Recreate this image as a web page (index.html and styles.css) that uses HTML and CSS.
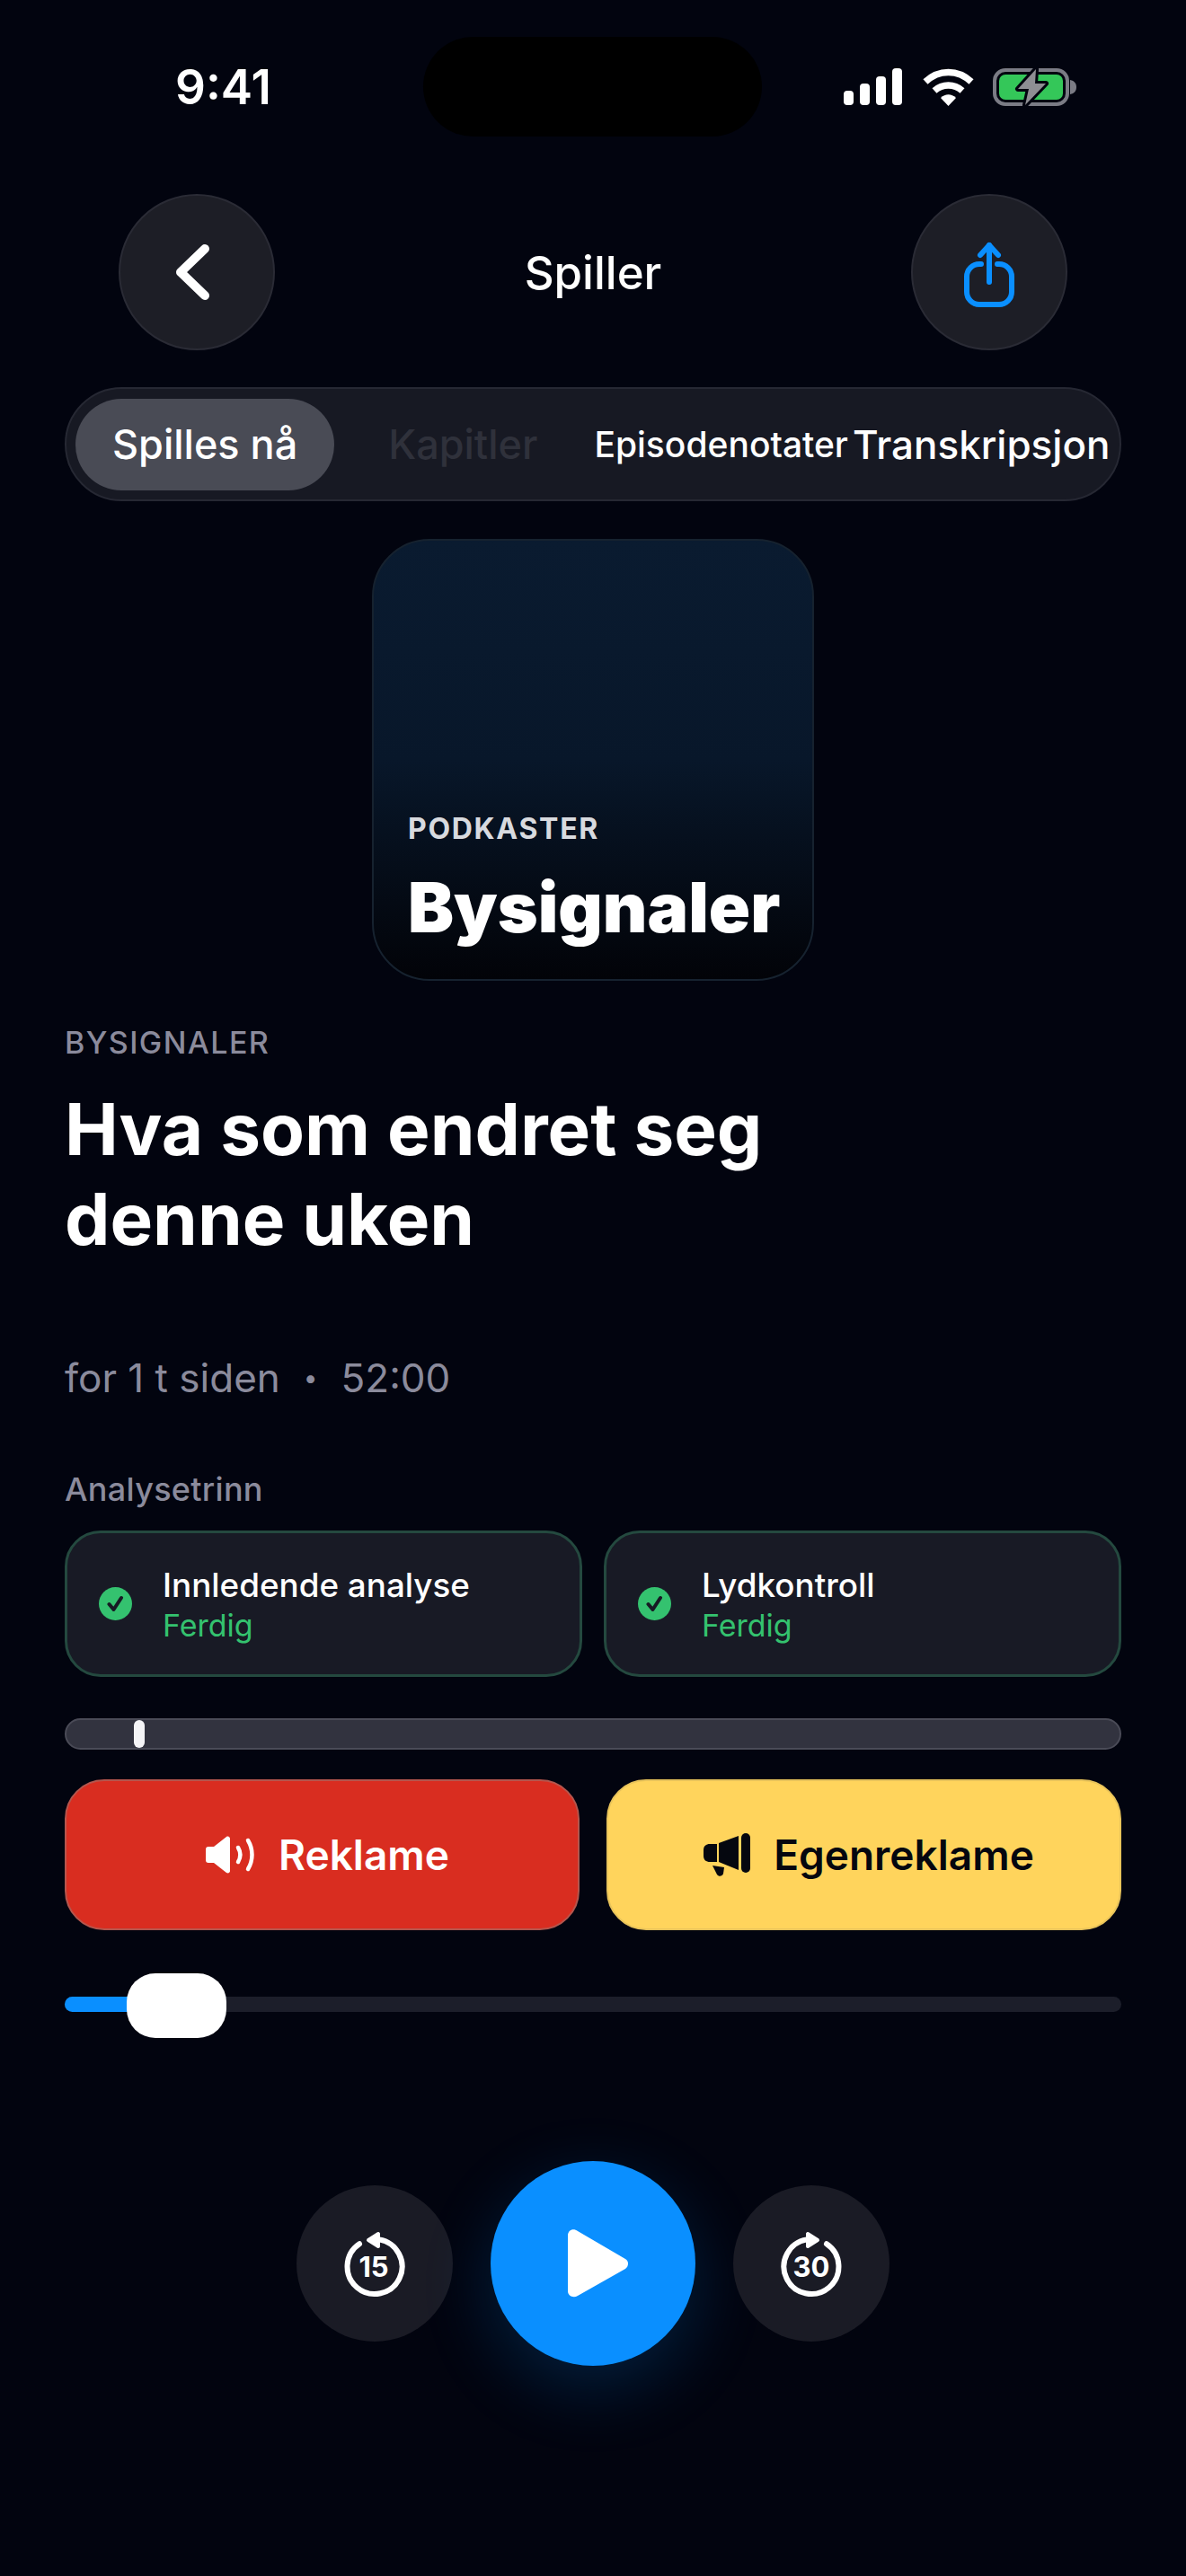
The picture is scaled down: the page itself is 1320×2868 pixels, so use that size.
FILE: index.html
```html
<!DOCTYPE html>
<html lang="nb">
  <head>
    <meta charset="UTF-8" />
    <meta name="viewport" content="width=device-width, initial-scale=1.0" />
    <title>Spiller</title>
    <link rel="stylesheet" href="styles.css">
  </head>
  <body>
    <div class="status-bar">
      <span class="time">9:41</span>
      <div class="island"></div>
      <div class="status-icons">
        <svg width="65" height="41" viewBox="0 0 65 41" fill="#fff">
          <rect x="0" y="25" width="11" height="16" rx="4" />
          <rect x="18" y="17" width="11" height="24" rx="4" />
          <rect x="36" y="9" width="11" height="32" rx="4" />
          <rect x="54" y="0" width="11" height="41" rx="4" />
        </svg>
        <svg class="wifi" width="57" height="42" viewBox="0 0 57 42" fill="none" stroke="#fff" stroke-width="7.5">
          <path d="M3 15 C18 1 39 1 54 15" />
          <path d="M13 25 C22 17 35 17 44 25" />
          <path d="M20 33 L28.5 42 L37 33 C32 28 25 28 20 33 Z" fill="#fff" stroke="none" />
        </svg>
        <svg class="battery" width="93" height="44" viewBox="0 0 93 44">
          <rect x="2" y="3" width="81" height="38" rx="12" fill="none" stroke="#7b7c85" stroke-width="4" />
          <rect x="7" y="8" width="71" height="28" rx="7" fill="#34c759" />
          <path d="M86 14 C91 15 93 18 93 22 C93 26 91 29 86 30 Z" fill="#7b7c85" />
          <path class="bolt" d="M48 2 L28 24 L40 24 L36 42 L59 18 L47 18 Z" />
        </svg>
      </div>
    </div>

    <div class="nav">
      <button class="round-btn">
        <svg width="60" height="80" viewBox="0 0 60 80" fill="none" stroke="#fff" stroke-width="10" stroke-linecap="round" stroke-linejoin="round">
          <path d="M39 14 L12 40 L39 66" />
        </svg>
      </button>
      <span class="nav-title">Spiller</span>
      <button class="round-btn">
        <svg width="60" height="80" viewBox="0 0 60 80" fill="none" stroke="#0a8fff" stroke-width="6" stroke-linecap="round" stroke-linejoin="round">
          <path d="M21 31 H19 A14 14 0 0 0 5 45 V62 A14 14 0 0 0 19 76 H41 A14 14 0 0 0 55 62 V45 A14 14 0 0 0 41 31 H39" />
          <path d="M30 51 V10" />
          <path d="M20 21 L30 10 L40 21" />
        </svg>
      </button>
    </div>

    <div class="tabs">
      <span class="tab tab-active">Spilles nå</span>
      <span class="tab tab-disabled">Kapitler</span>
      <span class="tab tab-small">Episodenotater</span>
      <span class="tab tab-last">Transkripsjon</span>
    </div>

    <div class="cover">
      <div class="cover-label">PODKASTER</div>
      <div class="cover-title">Bysignaler</div>
    </div>

    <div class="episode">
      <div class="show-name">BYSIGNALER</div>
      <h1 class="episode-title">Hva som endret seg<br />denne uken</h1>
      <div class="meta">
        <span>for 1 t siden</span>
        <span class="meta-dot">•</span>
        <span>52:00</span>
      </div>
      <div class="steps-label">Analysetrinn</div>
    </div>

    <div class="steps">
      <div class="step">
        <svg class="check" width="37" height="37" viewBox="0 0 37 37">
          <circle cx="18.5" cy="18.5" r="18.5" fill="#34c26f" />
          <path d="M11.5 19 L16.5 25 L25 12" fill="none" stroke="#171a24" stroke-width="4" stroke-linecap="round" stroke-linejoin="round" />
        </svg>
        <div>
          <div class="step-title">Innledende analyse</div>
          <div class="step-status">Ferdig</div>
        </div>
      </div>
      <div class="step">
        <svg class="check" width="37" height="37" viewBox="0 0 37 37">
          <circle cx="18.5" cy="18.5" r="18.5" fill="#34c26f" />
          <path d="M11.5 19 L16.5 25 L25 12" fill="none" stroke="#171a24" stroke-width="4" stroke-linecap="round" stroke-linejoin="round" />
        </svg>
        <div>
          <div class="step-title">Lydkontroll</div>
          <div class="step-status">Ferdig</div>
        </div>
      </div>
    </div>

    <div class="strip">
      <div class="strip-thumb"></div>
    </div>

    <div class="ad-buttons">
      <button class="ad-btn ad-red">
        <svg width="56" height="42" viewBox="0 0 56 42" fill="#fff">
          <path d="M1 15 C1 13 2 12 4 12 H10 L24 1 C26 0 28 1 28 3 V39 C28 41 26 42 24 41 L10 30 H4 C2 30 1 29 1 27 Z" />
          <path d="M37 13 C40 18 40 24 37 29" fill="none" stroke="#fff" stroke-width="4.5" stroke-linecap="round" />
          <path d="M48 5 C54 15 54 27 48 37" fill="none" stroke="#fff" stroke-width="4.5" stroke-linecap="round" />
        </svg>
        Reklame
      </button>
      <button class="ad-btn ad-yellow">
        <svg width="52" height="48" viewBox="0 0 52 48" fill="#05070f">
          <path d="M0 19 C0 14 3 12 7 12 H15 V32 H7 C3 32 0 30 0 25 Z" />
          <path d="M17 11 L39 3 V41 L17 32 Z" />
          <rect x="42" y="0" width="10" height="44" rx="5" />
          <path d="M10 36 L23 38 L22 45 C21 48 17 49 15 46 Z" />
        </svg>
        Egenreklame
      </button>
    </div>

    <div class="seek">
      <div class="seek-fill"></div>
      <div class="seek-thumb"></div>
    </div>

    <div class="controls">
      <button class="round-btn">
        <svg width="70" height="76" viewBox="0 0 70 76">
          <path d="M40 11.4 A30.5 30.5 0 1 1 18 16.2" fill="none" stroke="#fff" stroke-width="6" stroke-linecap="round" />
          <path d="M28 12 L39 5 V19 Z" fill="#fff" stroke="#fff" stroke-width="4" stroke-linejoin="round" />
          <text x="34" y="53" class="skip-num" text-anchor="middle">15</text>
        </svg>
      </button>
      <button class="play-btn">
        <svg width="68" height="76" viewBox="0 0 68 76" fill="#fff">
          <path d="M0 7 C0 1 6 -2 11 2 L64 33 C68 35 68 41 64 44 L11 74 C6 77 0 74 0 69 Z" />
        </svg>
      </button>
      <button class="round-btn">
        <svg width="70" height="76" viewBox="0 0 70 76">
          <path d="M30 11.4 A30.5 30.5 0 1 0 52 16.2" fill="none" stroke="#fff" stroke-width="6" stroke-linecap="round" />
          <path d="M42 12 L31 5 V19 Z" fill="#fff" stroke="#fff" stroke-width="4" stroke-linejoin="round" />
          <text x="35" y="53" class="skip-num" text-anchor="middle">30</text>
        </svg>
      </button>
    </div>
  </body>
</html>
```

FILE: styles.css
```css
* {
  box-sizing: border-box;
}

body {
  margin: 0;
  width: 1320px;
  height: 2868px;
  overflow: hidden;
  background-color: #02040f;
  color: #fff;
  font-family: "Inter", "Liberation Sans", sans-serif;
}

button {
  font-family: inherit;
  padding: 0;
  cursor: pointer;
}

.status-bar {
  display: flex;
  align-items: center;
  height: 152px;
  padding-top: 41px;
  padding-left: 195px;
}

.time {
  width: 276px;
  font-size: 53px;
  font-weight: 600;
}

.island {
  width: 377px;
  height: 111px;
  border-radius: 56px;
  background-color: #000;
}

.status-icons {
  display: flex;
  align-items: center;
  margin-left: 91px;
}

.wifi {
  margin-left: 23px;
}

.battery {
  margin-left: 21px;
}

.bolt {
  fill: #8e8e93;
  stroke: #02040f;
  stroke-width: 6;
  stroke-linejoin: round;
  paint-order: stroke;
}

.nav {
  display: flex;
  justify-content: space-between;
  align-items: center;
  margin-top: 64px;
  padding: 0 132px;
}

.nav-title {
  font-size: 51px;
  font-weight: 500;
}

.round-btn {
  display: flex;
  justify-content: center;
  align-items: center;
  width: 174px;
  height: 174px;
  border-radius: 50%;
  background-color: #1d1e26;
  border: 2px solid #2a2b35;
}

.tabs {
  display: flex;
  align-items: center;
  height: 127px;
  margin: 41px 72px 0;
  padding-left: 10px;
  border-radius: 64px;
  background-color: #171923;
  border: 2px solid #262833;
  white-space: nowrap;
}

.tab {
  font-size: 45px;
  font-weight: 500;
}

.tab-active {
  padding: 0 41px;
  height: 102px;
  line-height: 102px;
  border-radius: 51px;
  background-color: #494b55;
}

.tab-disabled {
  margin-left: 60px;
  color: #2f313b;
}

.tab-small {
  margin-left: 63px;
  font-size: 39px;
}

.tab-last {
  margin-left: 5px;
  font-size: 44px;
}

.cover {
  display: flex;
  flex-direction: column;
  justify-content: flex-end;
  width: 492px;
  height: 492px;
  margin: 42px auto 0;
  padding: 0 38px 34px;
  border-radius: 64px;
  border: 2px solid #16222f;
  background: linear-gradient(180deg, #0a1b30 0%, #08172a 50%, #020308 100%);
}

.cover-label {
  font-size: 32px;
  font-weight: 700;
  letter-spacing: 1.7px;
  color: #d8dadf;
}

.cover-title {
  margin-top: 22px;
  font-size: 76.5px;
  font-weight: 900;
  white-space: nowrap;
}

.episode {
  padding: 0 72px;
}

.show-name {
  margin-top: 48px;
  font-size: 34px;
  font-weight: 500;
  letter-spacing: 1.4px;
  color: #8b8b9c;
}

.episode-title {
  margin: 26px 0 0;
  font-size: 80px;
  line-height: 100px;
  font-weight: 700;
}

.meta {
  display: flex;
  margin-top: 100px;
  font-size: 44px;
  color: #8b8b9c;
}

.meta-dot {
  margin: 0 26px;
  font-size: 28px;
  line-height: 54px;
}

.steps-label {
  margin-top: 75px;
  font-size: 36px;
  font-weight: 500;
  letter-spacing: 0.3px;
  color: #8b8b9c;
}

.steps {
  display: flex;
  gap: 24px;
  margin: 24px 72px 0;
}

.step {
  flex: 1;
  display: flex;
  align-items: center;
  gap: 34px;
  height: 163px;
  padding-left: 35px;
  border-radius: 40px;
  background-color: #181a25;
  border: 3px solid #24493f;
}

.step-title {
  font-size: 36.8px;
  font-weight: 500;
}

.step-status {
  margin-top: 2px;
  font-size: 34px;
  color: #34c26f;
}

.strip {
  height: 35px;
  margin: 46px 72px 0;
  padding-left: 75px;
  border-radius: 18px;
  background-color: #32333f;
  border: 2px solid #4a4b57;
}

.strip-thumb {
  width: 12px;
  height: 31px;
  border-radius: 6px;
  background-color: #f4f4f6;
}

.ad-buttons {
  display: flex;
  gap: 30px;
  margin: 33px 72px 0;
}

.ad-btn {
  flex: 1;
  display: flex;
  justify-content: center;
  align-items: center;
  gap: 26px;
  height: 168px;
  padding-left: 11px;
  border-radius: 44px;
  font-size: 46px;
  font-weight: 600;
}

.ad-red {
  background-color: #d92d20;
  border: 2px solid #b5564d;
  color: #fff;
}

.ad-yellow {
  background-color: #ffd45c;
  border: 2px solid #e8c35a;
  color: #05070f;
}

.seek {
  position: relative;
  height: 17px;
  margin: 74px 72px 0;
  border-radius: 9px;
  background-color: #1c1e2a;
}

.seek-fill {
  width: 90px;
  height: 17px;
  border-radius: 9px 0 0 9px;
  background-color: #0a8fff;
}

.seek-thumb {
  position: absolute;
  left: 69px;
  top: -26px;
  width: 111px;
  height: 72px;
  border-radius: 32px;
  background-color: #fff;
}

.controls {
  display: flex;
  justify-content: center;
  align-items: center;
  gap: 42px;
  margin-top: 166px;
}

.controls .round-btn {
  border: none;
  background-color: #1a1b25;
}

.play-btn {
  display: flex;
  justify-content: center;
  align-items: center;
  width: 228px;
  height: 228px;
  padding-left: 12px;
  border: none;
  border-radius: 50%;
  background-color: #0a8fff;
  box-shadow: 0 24px 80px rgba(10, 143, 255, 0.2);
}

.skip-num {
  font-family: "Inter", sans-serif;
  font-size: 31px;
  font-weight: 700;
  fill: #fff;
}
```
